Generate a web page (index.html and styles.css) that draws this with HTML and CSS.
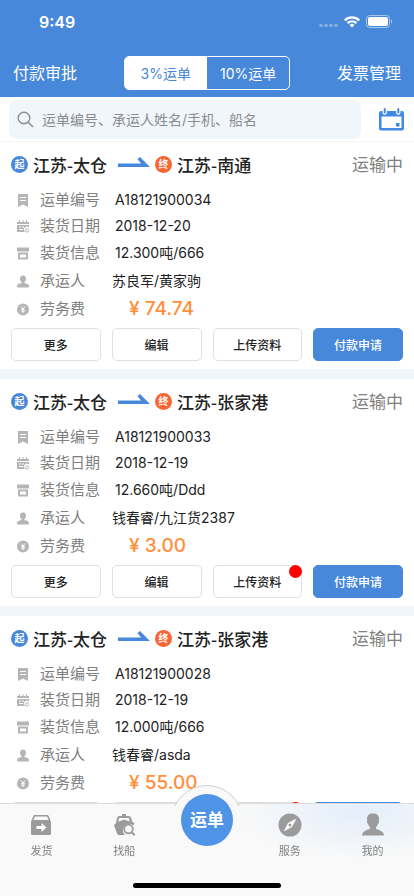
FILE: index.html
```html
<!DOCTYPE html>
<html lang="zh-CN">
<head>
    <meta charset="UTF-8">
    <meta name="viewport" content="width=device-width, initial-scale=1.0">
    <title>运单</title>
    <link rel="stylesheet" href="styles.css">
</head>
<body>
    <!-- 图标 -->
    <svg class="sprite" aria-hidden="true">
        <symbol id="i-arrow" viewBox="0 0 32 12">
            <path d="M0 7.500h23L19.500 3 22 1l10 10H0z"/>
        </symbol>
        <symbol id="i-bill" viewBox="0 0 12 13">
            <path fill-rule="evenodd" d="M1 0h10v13l-5-2.500L1 13zM3 3v1h6V3zM3 6v1h6V6z"/>
        </symbol>
        <symbol id="i-date" viewBox="0 0 12 13">
            <path fill-rule="evenodd" d="M0 2h2V0h1v2h2.500V0h1v2H9V0h1v2h2v2H0zM0 5h12v2.500a3 3 0 0 0-4 4.500H0zM2 6.500v1h2v-1zM5 6.500v1h2v-1zM2 9v1h4V9z"/>
            <circle cx="10" cy="10.500" r="1.600" fill="none" stroke="#b5b5b5" stroke-width="1"/>
        </symbol>
        <symbol id="i-box" viewBox="0 0 12 12">
            <path fill-rule="evenodd" d="M0 0h12v4H0zM1 5h10v7H1zM3 7v3h6V7z"/>
        </symbol>
        <symbol id="i-man" viewBox="0 0 12 12">
            <path d="M6 0c2 0 3 1.300 3 3.200C9 4.800 8.300 6 7.500 6.600v.9C9 8 12 8.400 12 10.500c0 1-.5 1.500-1.500 1.500h-9C.5 12 0 11.500 0 10.500 0 8.400 3 8 4.500 7.500v-.9C3.700 6 3 4.800 3 3.200 3 1.300 4 0 6 0z"/>
        </symbol>
        <symbol id="i-fee" viewBox="0 0 12 12">
            <circle cx="6" cy="6" r="6"/>
            <path d="M4 3l2 2.500L8 3M6 5.500V9.500M4.200 6h3.600M4.200 7.700h3.600" fill="none" stroke="#fff" stroke-width="1"/>
        </symbol>
    </svg>

    <header class="header">
        <div class="status-bar">
            <span class="time">9:49</span>
            <svg class="signals" viewBox="0 0 74 14" aria-hidden="true">
                <g fill="#fff">
                    <g fill-opacity=".35">
                        <circle cx="2" cy="10.500" r="1.800"/><circle cx="7" cy="10.500" r="1.800"/>
                        <circle cx="12" cy="10.500" r="1.800"/><circle cx="17" cy="10.500" r="1.800"/>
                    </g>
                    <path d="M25 4.500a11.500 11.500 0 0 1 16 0l-1.600 1.700a9.200 9.200 0 0 0-12.800 0z"/>
                    <path d="M27.800 7.300a7.600 7.600 0 0 1 10.400 0L36.600 9a5.200 5.200 0 0 0-7.200 0z"/>
                    <path d="M30.500 10a3.700 3.700 0 0 1 5 0L33 12.600z"/>
                    <rect x="49" y="2" width="20" height="9" rx="2"/>
                    <path d="M72 4.500c1.700.6 1.700 3.400 0 4z" fill-opacity=".5"/>
                </g>
                <rect x="47.500" y=".5" width="23" height="12" rx="3" fill="none" stroke="#fff" stroke-opacity=".5"/>
            </svg>
        </div>
        <div class="nav-bar">
            <a class="nav-link" href="#approve">付款审批</a>
            <div class="segment">
                <button type="button" class="segment-item active">3%运单</button>
                <button type="button" class="segment-item">10%运单</button>
            </div>
            <a class="nav-link" href="#invoice">发票管理</a>
        </div>
    </header>

    <form class="search">
        <label class="search-box">
            <svg class="search-icon" viewBox="0 0 17 17" aria-hidden="true">
                <circle cx="7" cy="7" r="5.800" fill="none" stroke="#8a8d90" stroke-width="1.400"/>
                <path d="M11 11l5 5" stroke="#8a8d90" stroke-width="1.600"/>
            </svg>
            <input type="search" aria-label="搜索运单" placeholder="运单编号、承运人姓名/手机、船名">
        </label>
        <button type="button" class="calendar" aria-label="选择日期">
            <svg viewBox="0 0 25 23" aria-hidden="true">
                <path fill="#4189e2" fill-rule="evenodd" d="M2 3h1.500v1.500a2.200 2.200 0 0 0 4.400 0V3h9.200v1.500a2.200 2.200 0 0 0 4.400 0V3H23a2 2 0 0 1 2 2v15.500a2 2 0 0 1-2 2H2a2 2 0 0 1-2-2V5a2 2 0 0 1 2-2zM2.500 8.500V20h20V8.500z"/>
                <rect x="4.700" y="0" width="2" height="5.500" rx="1" fill="#4189e2"/>
                <rect x="18.300" y="0" width="2" height="5.500" rx="1" fill="#4189e2"/>
                <rect x="17" y="15" width="3.500" height="3.500" fill="#4189e2"/>
            </svg>
        </button>
    </form>

    <main class="list">
        <article class="card">
            <div class="route">
                <span class="mark start">起</span>
                <h2>江苏-太仓</h2>
                <svg class="arrow"><use href="#i-arrow"/></svg>
                <span class="mark end">终</span>
                <h2>江苏-南通</h2>
                <span class="state">运输中</span>
            </div>
            <dl class="info">
                <div class="row short"><dt><svg><use href="#i-bill"/></svg>运单编号</dt><dd>A18121900034</dd></div>
                <div class="row short"><dt><svg><use href="#i-date"/></svg>装货日期</dt><dd>2018-12-20</dd></div>
                <div class="row"><dt><svg><use href="#i-box"/></svg>装货信息</dt><dd>12.300吨/666</dd></div>
                <div class="row carrier"><dt><svg><use href="#i-man"/></svg>承运人</dt><dd>苏良军/黄家驹</dd></div>
                <div class="row fee"><dt><svg><use href="#i-fee"/></svg>劳务费</dt><dd>¥ 74.74</dd></div>
            </dl>
            <div class="actions">
                <button type="button" class="btn">更多</button>
                <button type="button" class="btn">编辑</button>
                <button type="button" class="btn">上传资料</button>
                <button type="button" class="btn primary">付款申请</button>
            </div>
        </article>

        <article class="card">
            <div class="route">
                <span class="mark start">起</span>
                <h2>江苏-太仓</h2>
                <svg class="arrow"><use href="#i-arrow"/></svg>
                <span class="mark end">终</span>
                <h2>江苏-张家港</h2>
                <span class="state">运输中</span>
            </div>
            <dl class="info">
                <div class="row short"><dt><svg><use href="#i-bill"/></svg>运单编号</dt><dd>A18121900033</dd></div>
                <div class="row short"><dt><svg><use href="#i-date"/></svg>装货日期</dt><dd>2018-12-19</dd></div>
                <div class="row"><dt><svg><use href="#i-box"/></svg>装货信息</dt><dd>12.660吨/Ddd</dd></div>
                <div class="row carrier"><dt><svg><use href="#i-man"/></svg>承运人</dt><dd>钱春睿/九江货2387</dd></div>
                <div class="row fee"><dt><svg><use href="#i-fee"/></svg>劳务费</dt><dd>¥ 3.00</dd></div>
            </dl>
            <div class="actions">
                <button type="button" class="btn">更多</button>
                <button type="button" class="btn">编辑</button>
                <button type="button" class="btn dot">上传资料</button>
                <button type="button" class="btn primary">付款申请</button>
            </div>
        </article>

        <article class="card">
            <div class="route">
                <span class="mark start">起</span>
                <h2>江苏-太仓</h2>
                <svg class="arrow"><use href="#i-arrow"/></svg>
                <span class="mark end">终</span>
                <h2>江苏-张家港</h2>
                <span class="state">运输中</span>
            </div>
            <dl class="info">
                <div class="row short"><dt><svg><use href="#i-bill"/></svg>运单编号</dt><dd>A18121900028</dd></div>
                <div class="row short"><dt><svg><use href="#i-date"/></svg>装货日期</dt><dd>2018-12-19</dd></div>
                <div class="row"><dt><svg><use href="#i-box"/></svg>装货信息</dt><dd>12.000吨/666</dd></div>
                <div class="row carrier"><dt><svg><use href="#i-man"/></svg>承运人</dt><dd>钱春睿/asda</dd></div>
                <div class="row fee"><dt><svg><use href="#i-fee"/></svg>劳务费</dt><dd>¥ 55.00</dd></div>
            </dl>
            <div class="actions">
                <button type="button" class="btn">更多</button>
                <button type="button" class="btn">编辑</button>
                <button type="button" class="btn dot">上传资料</button>
                <button type="button" class="btn primary">付款申请</button>
            </div>
        </article>
    </main>

    <nav class="tab-bar">
        <a class="tab" href="#send">
            <svg viewBox="0 0 24 24" aria-hidden="true">
                <path fill="#9b9b9b" d="M5 2h14l2.500 5h-1.800L18 3.500H6L4.300 7H2.500z"/>
                <rect x="2" y="7" width="20" height="15" rx="1.500" fill="#9b9b9b"/>
                <path fill="#fff" d="M7.500 13h5v-3l5 4.500-5 4.500v-3h-5z"/>
            </svg>
            发货
        </a>
        <a class="tab" href="#find">
            <svg viewBox="0 0 24 24" aria-hidden="true">
                <path fill="#9b9b9b" d="M10 1h4v2h2.500c1.600 0 2.700 1 3 2.500l.7 3.500 2.300 1-1 2.500a6 6 0 0 0-8.500 9.500H6C4.500 19 2.800 15.500 2 12l2-1.800.8-4.700C5 4 6 3 7.500 3H10zM7 5l-.7 3.800L12 6.500l5.700 2L17 5z"/>
                <circle cx="16.500" cy="16" r="4.300" fill="#f9f9f9" stroke="#9b9b9b" stroke-width="1.800"/>
                <path d="M19.700 19.200l3 3" stroke="#9b9b9b" stroke-width="2"/>
            </svg>
            找船
        </a>
        <a class="tab main-tab" href="#waybill"><span>运单</span></a>
        <a class="tab" href="#service">
            <svg viewBox="0 0 24 24" aria-hidden="true">
                <circle cx="12" cy="12" r="11.500" fill="#9b9b9b"/>
                <path fill="#fff" d="M18.500 5.500L14 14l-8.500 4.500L10 10z"/>
                <circle cx="12" cy="12" r="1.500" fill="#9b9b9b"/>
            </svg>
            服务
        </a>
        <a class="tab" href="#mine">
            <svg viewBox="0 0 24 24" aria-hidden="true">
                <path fill="#9b9b9b" d="M12 .5c4 0 6 2 6 5.500 0 .8-.1 1.300-.3 1.800.7.700.2 2.700-.7 3-.4 1.400-1 2.500-2 3.400v1.600c1.500 1.200 8 1.700 8 6.700H1c0-5 6.500-5.500 8-6.700v-1.600c-1-.9-1.600-2-2-3.400-.9-.3-1.400-2.300-.7-3C6.100 7.300 6 6.800 6 6 6 2.500 8 .5 12 .5z"/>
            </svg>
            我的
        </a>
        <div class="home-indicator"></div>
    </nav>
</body>
</html>
```

FILE: styles.css
```css
* {
    box-sizing: border-box;
}

body {
    margin: 0;
    height: 100vh;
    display: flex;
    flex-direction: column;
    overflow: hidden;
    background-color: #fff;
    color: #222;
    font-family: Inter, 'Noto Sans CJK SC', sans-serif;
    font-size: 14px;
    line-height: 20px;
}

a {
    text-decoration: none;
}

button {
    padding: 0;
    font-family: inherit;
    cursor: pointer;
}

.sprite {
    display: none;
}

/* Header */
.header {
    flex: none;
    background-color: #4788da;
    color: #fff;
}

.status-bar {
    display: flex;
    align-items: center;
    justify-content: space-between;
    height: 44px;
    padding: 0 21px 0 39px;
}

.time {
    font-size: 16px;
    font-weight: 600;
}

.signals {
    width: 74px;
    height: 14px;
}

.nav-bar {
    display: flex;
    align-items: center;
    justify-content: space-between;
    height: 53px;
    padding: 5px 13px 0;
}

.nav-link {
    color: #fff;
    font-size: 16px;
}

.segment {
    display: flex;
    width: 43%;
    height: 34px;
    border: 1px solid #fff;
    border-radius: 5px;
    overflow: hidden;
}

.segment-item {
    flex: 1;
    border: 0;
    background: none;
    color: #fff;
    font-size: 14px;
}

.segment-item.active {
    background-color: #fff;
    color: #4788da;
}

/* Search */
.search {
    flex: none;
    display: flex;
    align-items: center;
    gap: 18px;
    height: 45px;
    padding: 0 10px 0 9px;
    border-bottom: 1px solid #f1f6fb;
}

.search-box {
    flex: 1;
    display: flex;
    align-items: center;
    gap: 8px;
    height: 39px;
    padding: 0 8px;
    border-radius: 8px;
    background-color: #f1f6fb;
}

.search-icon {
    width: 17px;
    height: 17px;
}

.search-box input {
    flex: 1;
    min-width: 0;
    padding: 0;
    border: 0;
    outline: 0;
    background: none;
    font-family: inherit;
    font-size: 14px;
}

.search-box input::placeholder {
    color: #8a8d90;
}

.calendar {
    width: 25px;
    height: 23px;
    border: 0;
    background: none;
}

.calendar svg {
    display: block;
}

/* List */
.list {
    flex: 1;
    min-height: 0;
    overflow: hidden;
    background-color: #f1f6fb;
}

.card {
    margin-bottom: 10px;
    padding: 0 11px 8px;
    background-color: #fff;
}

.route {
    display: flex;
    align-items: center;
    height: 45px;
}

.route h2 {
    margin: 0 0 0 5px;
    font-family: 'Noto Sans CJK SC', sans-serif;
    font-size: 17px;
    font-weight: 500;
}

.mark {
    width: 17px;
    height: 17px;
    border-radius: 50%;
    color: #fff;
    font-size: 10px;
    font-weight: bold;
    line-height: 17px;
    text-align: center;
}

.start {
    background-color: #4788da;
}

.end {
    background-color: #fa6432;
}

.arrow {
    width: 32px;
    height: 12px;
    margin: 0 5px 6px 11px;
    fill: #4788da;
}

.state {
    margin-left: auto;
    color: #808080;
    font-size: 17px;
}

.info {
    margin: 0 0 5px;
}

.row {
    display: flex;
    align-items: center;
    height: 28px;
    padding-left: 6px;
}

.row.short {
    height: 26px;
}

.row dt {
    display: flex;
    align-items: center;
    gap: 11px;
    width: 98px;
    color: #808080;
    font-size: 15px;
}

.row dt svg {
    width: 12px;
    height: 13px;
    fill: #b5b5b5;
}

.row dd {
    margin: 0;
}

.carrier dt {
    width: 95px;
}

.fee dt {
    width: 112px;
}

.fee dd {
    color: #ff8f3c;
    font-size: 19px;
    font-weight: 500;
}

.actions {
    display: grid;
    grid-template-columns: repeat(4, 1fr);
    gap: 11px;
}

.btn {
    position: relative;
    height: 33px;
    border: 1px solid #e0e0e0;
    border-radius: 5px;
    background-color: #fff;
    color: #222;
    font-size: 12px;
    font-weight: 500;
}

.btn.primary {
    border-color: #4788da;
    background-color: #4788da;
    color: #fff;
}

.btn.dot::after {
    content: '';
    position: absolute;
    top: -1px;
    right: -1px;
    width: 13px;
    height: 13px;
    border-radius: 50%;
    background-color: #f00;
}

/* Tab bar */
.tab-bar {
    position: fixed;
    left: 0;
    right: 0;
    bottom: 0;
    display: grid;
    grid-template-columns: repeat(5, 1fr);
    height: 93px;
    border-top: 1px solid #dcdcdc;
    background: radial-gradient(ellipse 30% 50% at 87% 10%, #e4eefa, #f9f9f9);
}

.tab {
    display: flex;
    flex-direction: column;
    align-items: center;
    gap: 6px;
    padding-top: 9px;
    color: #808080;
    font-size: 11px;
    line-height: 16px;
}

.tab svg {
    width: 24px;
    height: 24px;
}

.main-tab {
    position: relative;
    padding: 0;
}

/* round bump behind the middle button */
.main-tab::before {
    content: '';
    position: absolute;
    top: -19px;
    width: 70px;
    height: 70px;
    border: 1px solid #d0d0d0;
    border-radius: 50%;
    background-color: #f9f9f9;
    clip-path: inset(0 0 51px 0);
}

.main-tab span {
    position: absolute;
    top: -10px;
    width: 52px;
    height: 52px;
    border-radius: 50%;
    background-color: #5094e8;
    color: #fff;
    font-size: 17px;
    font-weight: bold;
    line-height: 52px;
    text-align: center;
}

.home-indicator {
    position: absolute;
    left: 50%;
    bottom: 8px;
    width: 148px;
    height: 5px;
    margin-left: -74px;
    border-radius: 3px;
    background-color: #000;
}
```
